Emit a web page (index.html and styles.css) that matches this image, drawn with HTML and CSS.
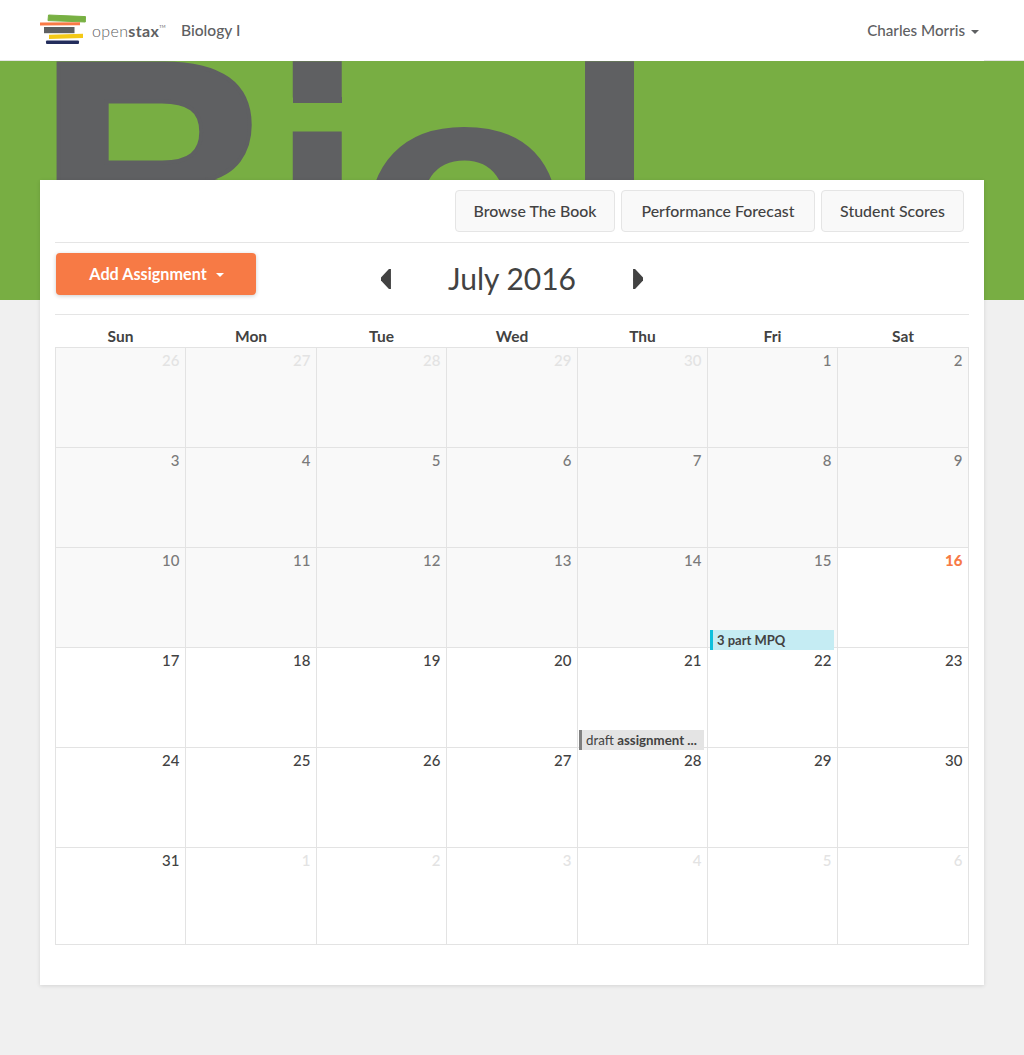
FILE: index.html
```html
<!DOCTYPE html>
<html lang="en">
<head>
<meta charset="utf-8">
<title>Biology I</title>
<link rel="stylesheet" href="styles.css">
</head>
<body>
<nav class="nav">
  <div class="nav-inner">
    <a class="brand">
      <svg class="logo" width="46" height="32" viewBox="0 0 46 32" aria-hidden="true">
        <path d="M8.500 1 L45.500 2.600 L45.300 8 L8 6.600 Z" fill="#78b043" stroke="#78b043" stroke-linejoin="round"/>
        <path d="M0 8.600 L40 8.200 V11.200 L0 11.400 Z" fill="#f97a46"/>
        <rect x="4" y="13" width="30.500" height="6.200" fill="#5e6062"/>
        <path d="M9 20.800 L43 19.800 V24 L9 25 Z" fill="#f4c916"/>
        <rect x="6" y="26.500" width="33" height="3.500" rx="1" fill="#232d5c"/>
      </svg>
      <span class="wordmark">open<b>stax</b><sup>TM</sup></span>
    </a>
    <span class="course">Biology I</span>
    <span class="user">Charles Morris<i class="caret"></i></span>
  </div>
</nav>
<header class="hero"><div class="hero-text"><span class="hero-b">B</span><span class="hero-i">i</span><span class="hero-o">o</span><span class="hero-l">l</span></div></header>
<main class="card">
  <div class="actions">
    <a class="btn btn-book">Browse The Book</a>
    <a class="btn btn-forecast">Performance Forecast</a>
    <a class="btn btn-scores">Student Scores</a>
  </div>
  <div class="toolbar">
    <a class="add">Add Assignment<i class="caret caret-white"></i></a>
    <div class="month">
      <i class="arrow arrow-left"></i>
      <span class="month-name">July 2016</span>
      <i class="arrow arrow-right"></i>
    </div>
  </div>
  <div class="weekdays">
    <span>Sun</span><span>Mon</span><span>Tue</span><span>Wed</span><span>Thu</span><span>Fri</span><span>Sat</span>
  </div>
  <div class="grid">
    <div class="cell past other">26</div><div class="cell past other">27</div><div class="cell past other">28</div><div class="cell past other">29</div><div class="cell past other">30</div><div class="cell past">1</div><div class="cell past">2</div>
    <div class="cell past">3</div><div class="cell past">4</div><div class="cell past">5</div><div class="cell past">6</div><div class="cell past">7</div><div class="cell past">8</div><div class="cell past">9</div>
    <div class="cell past">10</div><div class="cell past">11</div><div class="cell past">12</div><div class="cell past">13</div><div class="cell past">14</div><div class="cell past">15<div class="event event-blue"><b>3 part MPQ</b></div></div><div class="cell today">16</div>
    <div class="cell">17</div><div class="cell">18</div><div class="cell">19</div><div class="cell">20</div><div class="cell">21<div class="event event-gray">draft <b>assignment ...</b></div></div><div class="cell">22</div><div class="cell">23</div>
    <div class="cell">24</div><div class="cell">25</div><div class="cell">26</div><div class="cell">27</div><div class="cell">28</div><div class="cell">29</div><div class="cell">30</div>
    <div class="cell">31</div><div class="cell other">1</div><div class="cell other">2</div><div class="cell other">3</div><div class="cell other">4</div><div class="cell other">5</div><div class="cell other">6</div>
  </div>
</main>
</body>
</html>
```
FILE: styles.css
```css
* { box-sizing: border-box; }
html, body { margin: 0; padding: 0; }
body {
  background: #f0f0f0;
  color: #424242;
  font-family: Lato, "Liberation Sans", sans-serif;
  font-size: 15px;
  height: 1055px;
  overflow: hidden;
}
.nav {
  background: #fff;
  height: 61px;
  border-bottom: 1px solid #e5e5e5;
}
.nav-inner {
  height: 61px;
  margin: 0 40px;
  border-bottom: 1px solid #fff;
  display: flex;
  align-items: center;
  color: #5e6062;
}
.brand { display: flex; align-items: center; }
.logo { display: block; }
.wordmark {
  margin-left: 6px;
  font-size: 16px;
  font-weight: 300;
  letter-spacing: 0.35px;
  color: #5e6062;
}
.wordmark b { font-weight: 700; }
.wordmark sup { font-size: 4px; vertical-align: 9px; font-weight: 400; }
.course {
  margin-left: 15px;
  font-size: 15.600px;
  font-weight: 500;
}
.user {
  margin-left: auto;
  margin-right: 5px;
  font-size: 15.200px;
  font-weight: 500;
}
.caret {
  display: inline-block;
  width: 0;
  height: 0;
  margin-left: 6px;
  vertical-align: 2px;
  border-top: 4px solid #5e6062;
  border-left: 4px solid transparent;
  border-right: 4px solid transparent;
}
.caret-white { border-top-color: #fff; margin: 3px 0 0 9px; }

.hero {
  background: #78ae43;
  height: 239px;
  overflow: hidden;
  position: relative;
}
.hero-text {
  position: absolute;
  left: 30px;
  top: -37px;
  color: #5f6062;
  font-family: "Liberation Sans", sans-serif;
  font-weight: 700;
  font-size: 357px;
  line-height: 1;
  letter-spacing: -12.500px;
  white-space: nowrap;
}
.hero-b {
  display: inline-block;
  position: relative;
  left: 6px;
  top: -17px;
  letter-spacing: -20px;
  -webkit-text-stroke: 4px #5f6062;
  transform: scaleX(.94);
  transform-origin: left center;
}
.hero-i, .hero-l { position: relative; top: -6px; }
.hero-i::after {
  content: "";
  position: absolute;
  left: 25px;
  top: 100px;
  width: 49px;
  height: 6px;
  background: #5f6062;
}
.hero-o { position: relative; top: -7px; }

.card {
  position: relative;
  background: #fff;
  margin: -120px 40px 0;
  height: 805px;
  padding: 10px 15px 0;
  box-shadow: 0 1px 4px rgba(0, 0, 0, .12);
}
.actions {
  display: flex;
  justify-content: flex-end;
  gap: 6px;
  padding: 0 5px 10px 0;
  border-bottom: 1px solid #e5e5e5;
}
.btn {
  height: 42px;
  padding-bottom: 2px;
  display: flex;
  align-items: center;
  justify-content: center;
  background: #f9f9f9;
  border: 1px solid #e5e5e5;
  border-radius: 4px;
  font-size: 15.900px;
  font-weight: 500;
  color: #424242;
}
.btn-book { width: 160px; }
.btn-forecast { width: 194px; }
.btn-scores { width: 143px; }
.toolbar {
  position: relative;
  height: 72px;
  padding: 10px 0 0 1px;
  border-bottom: 1px solid #e5e5e5;
}
.add {
  width: 200px;
  height: 42px;
  padding: 0 0 2px 1px;
  display: flex;
  align-items: center;
  justify-content: center;
  background: #f77a45;
  color: #fff;
  font-weight: 700;
  font-size: 16.200px;
  border-radius: 4px;
  box-shadow: 0 1px 4px rgba(0, 0, 0, .2);
}
.add .caret { display: block; }
.month {
  position: absolute;
  left: 0;
  right: 0;
  top: 17px;
  display: flex;
  justify-content: center;
  align-items: center;
  gap: 57px;
  pointer-events: none;
}
.month-name { font-size: 30px; line-height: 36px; }
.arrow {
  display: block;
  width: 10px;
  height: 20px;
  margin-top: 2px;
  background: #424242;
}
.arrow-left { clip-path: polygon(100% 0, 100% 100%, 80% 100%, 0 58%, 0 42%, 80% 0); }
.arrow-right { clip-path: polygon(0 0, 0 100%, 20% 100%, 100% 58%, 100% 42%, 20% 0); }
.weekdays {
  display: grid;
  grid-template-columns: 130px 131px 130px 131px 130px 130px 131px;
  height: 32px;
  align-items: end;
  padding: 0 0 1px 0.5px;
  text-align: center;
  font-weight: 700;
  font-size: 15.500px;
  line-height: 20px;
}
.grid {
  display: grid;
  grid-template-columns: 130px 131px 130px 131px 130px 130px 131px;
  grid-template-rows: repeat(5, 100px) 97px;
  width: 914px;
  border-top: 1px solid #e3e3e3;
  border-left: 1px solid #e3e3e3;
}
.cell {
  position: relative;
  border-right: 1px solid #e3e3e3;
  border-bottom: 1px solid #e3e3e3;
  padding: 3px 5.500px 0 0;
  text-align: right;
  font-size: 15px;
  line-height: 18px;
  font-weight: 500;
  color: #424242;
}
.past { background: #f9f9f9; color: #7a7a7a; }
.other, .past.other { color: #e3e3e3; }
.today { color: #f77a45; font-weight: 900; }
.event {
  position: absolute;
  right: 3px;
  bottom: -3px;
  height: 20px;
  padding-left: 4px;
  text-align: left;
  font-size: 13px;
  line-height: 20px;
  font-weight: 400;
  color: #424242;
  z-index: 1;
  white-space: nowrap;
  overflow: hidden;
}
.event-blue { left: 2px; background: #c5ecf3; border-left: 3px solid #0dc0dc; }
.event-gray { left: 1px; font-size: 13.300px; background: #e4e4e4; border-left: 3px solid #808080; }
```
